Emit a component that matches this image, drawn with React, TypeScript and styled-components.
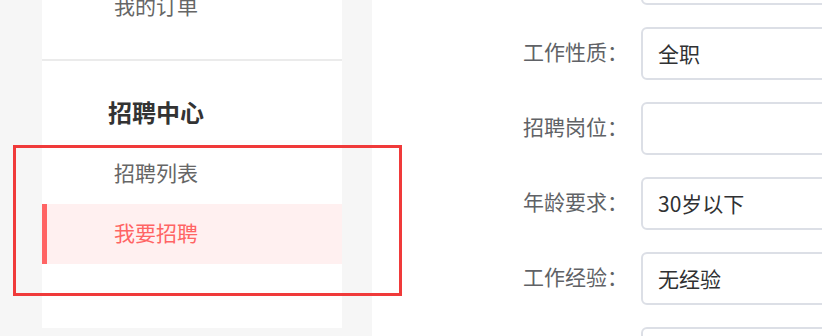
import React from "react";
import styled, { createGlobalStyle } from "styled-components";

const GlobalStyle = createGlobalStyle`
  html, body {
    margin: 0;
    padding: 0;
    background: #f6f6f6;
    font-family: "Noto Sans CJK SC", "Noto Sans", sans-serif;
  }
  * {
    box-sizing: border-box;
  }
`;

const Screen = styled.div`
  position: relative;
  width: 822px;
  height: 336px;
  overflow: hidden;
  background: #f6f6f6;
`;

// scroll position of the page
const Page = styled.div`
  display: flex;
  align-items: stretch;
  margin-top: -60px;
  min-height: 480px;
  padding-left: 42px;
`;

const Sidebar = styled.aside`
  width: 300px;
  flex-shrink: 0;
  align-self: flex-start;
  background: #fff;
`;

const Group = styled.div<{ $top: number; $bottom: number }>`
  padding: ${(p) => p.$top}px 0 ${(p) => p.$bottom}px;
  & + & {
    border-top: 2px solid #ebebeb;
  }
`;

const GroupTitle = styled.div`
  height: 60px;
  display: flex;
  align-items: center;
  padding: 0 0 6px 66px;
  font-size: 24px;
  font-weight: 700;
  color: #333;
`;

const MenuItem = styled.div<{ $active?: boolean }>`
  height: 60px;
  display: flex;
  align-items: center;
  padding: 0 0 5px ${(p) => (p.$active ? 67 : 72)}px;
  border-left: ${(p) => (p.$active ? "5px solid #ff6464" : "none")};
  background: ${(p) => (p.$active ? "#fff0f0" : "transparent")};
  color: ${(p) => (p.$active ? "#ff6464" : "#666")};
  font-size: 21px;
  cursor: pointer;
`;

const Main = styled.main`
  flex: 1;
  margin-left: 30px;
  background: #fff;
  padding: 12px 0 0 130px;
`;

const Form = styled.div`
  display: flex;
  flex-direction: column;
  gap: 22.5px;
`;

const Row = styled.div`
  display: flex;
  align-items: center;
`;

const Label = styled.label`
  width: 126px;
  flex-shrink: 0;
  text-align: right;
  font-size: 21px;
  color: #606266;
  margin: 0 13px 5px 0;
`;

const Field = styled.div`
  width: 340px;
  height: 52.5px;
  flex-shrink: 0;
  display: flex;
  align-items: center;
  padding-left: 15px;
  border: 2px solid #dcdfe6;
  border-radius: 6px;
  font-size: 21px;
  color: #303133;
`;

const Highlight = styled.div`
  position: absolute;
  left: 13px;
  top: 145px;
  width: 389px;
  height: 151px;
  border: 3px solid #f03a3a;
  pointer-events: none;
`;

const fields = [
  { label: "", value: "" },
  { label: "工作性质：", value: "全职" },
  { label: "招聘岗位：", value: "" },
  { label: "年龄要求：", value: "30岁以下" },
  { label: "工作经验：", value: "无经验" },
  { label: "", value: "" },
];

export default function App() {
  return (
    <>
      <GlobalStyle />
      <Screen>
        <Page>
          <Sidebar>
            <Group $top={37} $bottom={22}>
              <MenuItem>我的订单</MenuItem>
            </Group>
            <Group $top={23} $bottom={64}>
              <GroupTitle>招聘中心</GroupTitle>
              <MenuItem>招聘列表</MenuItem>
              <MenuItem $active>我要招聘</MenuItem>
            </Group>
          </Sidebar>
          <Main>
            <Form>
              {fields.map((f, i) => (
                <Row key={i}>
                  <Label>{f.label}</Label>
                  <Field>{f.value}</Field>
                </Row>
              ))}
            </Form>
          </Main>
        </Page>
        <Highlight />
      </Screen>
    </>
  );
}
